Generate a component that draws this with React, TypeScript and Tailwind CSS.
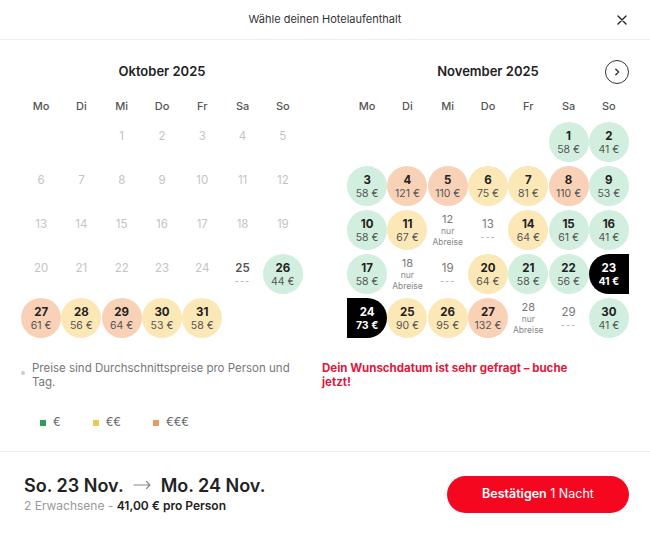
import React from "react";

type Tone = "g" | "y" | "o" | "sel-l" | "sel-r";

type Cell =
  | { kind: "empty" }
  | { kind: "past"; d: number }
  | { kind: "none"; d: number }
  | { kind: "dep"; d: number }
  | { kind: "price"; d: number; p: number; t: Tone };

const weekdays = ["Mo", "Di", "Mi", "Do", "Fr", "Sa", "So"];

const E: Cell = { kind: "empty" };
const past = (d: number): Cell => ({ kind: "past", d });
const none = (d: number): Cell => ({ kind: "none", d });
const dep = (d: number): Cell => ({ kind: "dep", d });
const pr = (d: number, p: number, t: Tone): Cell => ({ kind: "price", d, p, t });

const october: Cell[] = [
  E, E, past(1), past(2), past(3), past(4), past(5),
  past(6), past(7), past(8), past(9), past(10), past(11), past(12),
  past(13), past(14), past(15), past(16), past(17), past(18), past(19),
  past(20), past(21), past(22), past(23), past(24), none(25), pr(26, 44, "g"),
  pr(27, 61, "o"), pr(28, 56, "y"), pr(29, 64, "o"), pr(30, 53, "y"), pr(31, 58, "y"), E, E,
];

const november: Cell[] = [
  E, E, E, E, E, pr(1, 58, "g"), pr(2, 41, "g"),
  pr(3, 58, "g"), pr(4, 121, "o"), pr(5, 110, "o"), pr(6, 75, "y"), pr(7, 81, "y"), pr(8, 110, "o"), pr(9, 53, "g"),
  pr(10, 58, "g"), pr(11, 67, "y"), dep(12), none(13), pr(14, 64, "y"), pr(15, 61, "g"), pr(16, 41, "g"),
  pr(17, 58, "g"), dep(18), none(19), pr(20, 64, "y"), pr(21, 58, "g"), pr(22, 56, "g"), pr(23, 41, "sel-l"),
  pr(24, 73, "sel-r"), pr(25, 90, "y"), pr(26, 95, "y"), pr(27, 132, "o"), dep(28), none(29), pr(30, 41, "g"),
];

const toneClass: Record<Tone, string> = {
  g: "bg-[#d2eedf] rounded-full",
  y: "bg-[#fce8b6] rounded-full",
  o: "bg-[#f9d1b7] rounded-full",
  "sel-l": "bg-black rounded-l-full",
  "sel-r": "bg-black rounded-r-full",
};

function Day({ c }: { c: Cell }) {
  if (c.kind === "empty") return <div className="h-11" />;
  if (c.kind === "past") {
    return (
      <div className="flex h-11 flex-col items-center justify-center">
        <span className="text-[11.5px] leading-[14px] text-[#c4c4c4]">{c.d}</span>
        <span className="h-3" />
      </div>
    );
  }
  if (c.kind === "none") {
    return (
      <div className="flex h-11 flex-col items-center justify-center">
        <span className={`text-[11.5px] leading-[14px] ${c.d === 25 ? "font-semibold text-[#555]" : "text-[#777]"}`}>{c.d}</span>
        <span className="text-[9px] leading-[12px] tracking-[1px] text-[#aaa]">---</span>
      </div>
    );
  }
  if (c.kind === "dep") {
    return (
      <div className="flex h-11 flex-col items-center justify-center">
        <span className="text-[11px] leading-[14px] text-[#777]">{c.d}</span>
        <span className="text-[8.5px] leading-[11px] text-[#888]">nur</span>
        <span className="text-[8.5px] leading-[11px] text-[#888]">Abreise</span>
      </div>
    );
  }
  const sel = c.t === "sel-l" || c.t === "sel-r";
  return (
    <div className="flex h-11 items-center justify-center">
      <div className={`flex h-10 w-10 flex-col items-center justify-center ${toneClass[c.t]}`}>
        <span className={`text-[11.5px] font-bold leading-[14px] ${sel ? "text-white" : "text-[#222]"}`}>{c.d}</span>
        <span className={`text-[10.5px] leading-[13px] ${sel ? "font-bold text-white" : "text-[#555]"}`}>{c.p} €</span>
      </div>
    </div>
  );
}

function Month({ title, cells, next }: { title: string; cells: Cell[]; next?: boolean }) {
  return (
    <div className="flex-1">
      <div className="relative flex h-6 items-center justify-center">
        <span className="text-[13px] font-semibold text-[#222]">{title}</span>
        {next && (
          <button className="absolute right-0 top-0 flex h-6 w-6 items-center justify-center rounded-full border-[1.5px] border-[#333]">
            <svg width="8" height="8" viewBox="0 0 8 8" fill="none">
              <path d="M2.8 1.2 5.6 4 2.8 6.8" stroke="#333" strokeWidth="1.4" strokeLinecap="round" strokeLinejoin="round" />
            </svg>
          </button>
        )}
      </div>
      <div className="mt-3 grid h-5 grid-cols-7 items-center text-center text-[11px] font-medium text-[#555]">
        {weekdays.map((w) => (
          <span key={w}>{w}</span>
        ))}
      </div>
      <div className="mt-1 grid grid-cols-7">
        {cells.map((c, i) => (
          <Day key={i} c={c} />
        ))}
      </div>
    </div>
  );
}

export default function App() {
  return (
    <div className="flex h-[536px] w-[650px] flex-col overflow-hidden bg-white font-['Inter',sans-serif] text-[#222]">
      <header className="relative flex h-10 shrink-0 items-center justify-center border-b border-[#eeeeee]">
        <span className="text-[11px] text-[#333]">Wähle deinen Hotelaufenthalt</span>
        <button className="absolute right-[23px] top-[15px]">
          <svg width="10" height="10" viewBox="0 0 10 10">
            <path d="M1 1 9 9M9 1 1 9" stroke="#222" strokeWidth="1.4" strokeLinecap="round" />
          </svg>
        </button>
      </header>

      <main className="flex-1">
        <div className="flex gap-[44px] px-[21px] pt-5">
          <Month title="Oktober 2025" cells={october} />
          <Month title="November 2025" cells={november} next />
        </div>

        <div className="mt-[21px] flex px-[21px]">
          <div className="flex w-[301px] items-start gap-[7px]">
            <span className="mt-[10px] h-1 w-1 shrink-0 rounded-full bg-[#cccccc]" />
            <p className="w-[272px] text-[11.5px] leading-[14px] text-[#777]">
              Preise sind Durchschnittspreise pro Person und Tag.
            </p>
          </div>
          <p className="w-[262px] text-[11.5px] font-bold leading-[14px] text-[#e0163c]">
            Dein Wunschdatum ist sehr gefragt – buche jetzt!
          </p>
        </div>

        <div className="mt-[25px] flex items-center gap-8 pl-[40px] text-[11.5px] text-[#666]">
          <span className="flex items-center gap-[7px]">
            <span className="h-[6px] w-[6px] bg-[#2e9c5a]" />€
          </span>
          <span className="flex items-center gap-[7px]">
            <span className="h-[6px] w-[6px] bg-[#ecc84e]" />€€
          </span>
          <span className="flex items-center gap-[7px]">
            <span className="h-[6px] w-[6px] bg-[#eb9a5f]" />€€€
          </span>
        </div>
      </main>

      <footer className="flex h-[85px] shrink-0 items-center justify-between border-t border-[#eeeeee] pl-6 pr-[21px]">
        <div className="flex flex-col">
          <div className="flex h-6 items-center gap-[9px] text-[18px] font-semibold text-[#222]">
            <span>So. 23 Nov.</span>
            <svg width="19" height="10" viewBox="0 0 19 10" fill="none">
              <path d="M1 5h16M13.5 1.5 17 5l-3.5 3.5" stroke="#888" strokeWidth="1.1" strokeLinecap="round" strokeLinejoin="round" />
            </svg>
            <span>Mo. 24 Nov.</span>
          </div>
          <div className="h-[18px] text-[12px] leading-[18px] text-[#999]">
            2 Erwachsene - <span className="font-semibold text-[#222]">41,00 € pro Person</span>
          </div>
        </div>
        <button className="h-[37px] w-[182px] rounded-full bg-[#f5081f] text-[12.5px] text-white">
          <span className="font-semibold">Bestätigen</span> 1 Nacht
        </button>
      </footer>
    </div>
  );
}
